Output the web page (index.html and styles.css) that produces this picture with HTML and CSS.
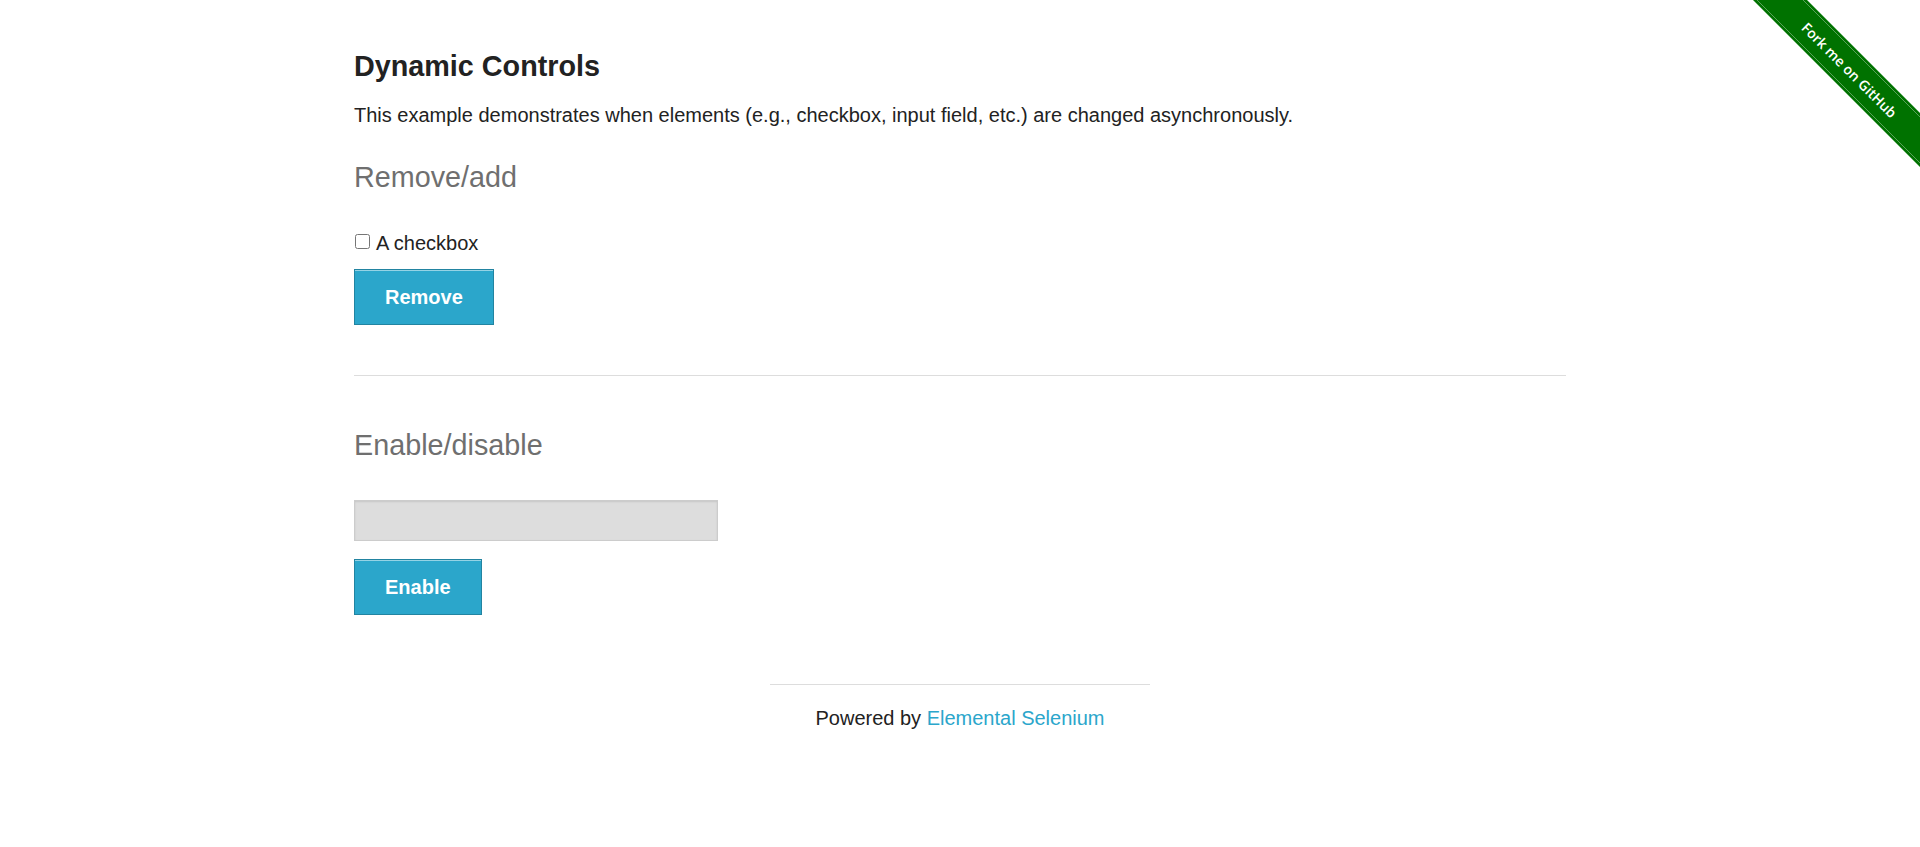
FILE: index.html
```html
<!DOCTYPE html>
<html lang="en">
<head>
<meta charset="utf-8">
<title>The Internet</title>
<link rel="stylesheet" href="styles.css">
</head>
<body>
<a class="ribbon" href="#" aria-label="Fork me on GitHub">
  <svg width="186" height="186" viewBox="0 0 186 186">
    <polygon points="19,0 73,0 186,113 186,167" fill="#007200"/>
    <line x1="69" y1="0" x2="186" y2="117" stroke="rgba(255,255,255,0.35)" stroke-width="1"/>
    <line x1="23" y1="0" x2="186" y2="163" stroke="rgba(255,255,255,0.35)" stroke-width="1"/>
    <text x="115.5" y="70" transform="rotate(45 115.5 70)" text-anchor="middle" dominant-baseline="central" class="ribbon-text">Fork me on GitHub</text>
  </svg>
</a>
<div class="row">
  <div class="content">
    <h3 class="title">Dynamic Controls</h3>
    <p class="intro">This example demonstrates when elements (e.g., checkbox, input field, etc.) are changed asynchronously.</p>
    <h4 class="subheader first">Remove/add</h4>
    <div class="checkbox-row"><input type="checkbox" class="cb"><span>A checkbox</span></div>
    <button class="button btn-remove" type="button">Remove</button>
    <hr class="divider">
    <h4 class="subheader second">Enable/disable</h4>
    <input type="text" class="text-input" disabled>
    <button class="button btn-enable" type="button">Enable</button>
  </div>
</div>
<div class="footer">
  <hr class="footer-hr">
  <div class="powered">Powered by <a href="#">Elemental Selenium</a></div>
</div>
</body>
</html>
```
FILE: styles.css
```css
html, body {
  margin: 0;
  padding: 0;
  background: #fff;
}
body {
  font-family: "Liberation Sans", Arial, sans-serif;
  color: #222;
  font-size: 20px;
}
.row {
  max-width: 1250px;
  margin: 0 auto;
}
.content {
  padding: 49px 19px 0 19px;
  display: flex;
  flex-direction: column;
  align-items: flex-start;
}
.title {
  margin: 0;
  font-size: 28.75px;
  line-height: 34px;
  font-weight: bold;
  color: #222;
}
.intro {
  margin: 16px 0 0 0;
  font-size: 20px;
  line-height: 32px;
}
.subheader {
  margin: 0;
  font-size: 28.75px;
  line-height: 34px;
  font-weight: normal;
  color: #6f6f6f;
}
.subheader.first { margin-top: 29px; }
.subheader.second { margin-top: 52px; }
.checkbox-row {
  margin-top: 37px;
  height: 24px;
  line-height: 24px;
  display: flex;
  align-items: center;
}
.cb {
  width: 15px;
  height: 15px;
  margin: -3px 6px 0 1px;
}
.button {
  font-family: "Liberation Sans", Arial, sans-serif;
  font-weight: bold;
  font-size: 20px;
  line-height: 24px;
  color: #fff;
  background: #2ba6cb;
  border: 1px solid #2284a1;
  box-shadow: inset 0 1px 0 rgba(255,255,255,0.5);
  padding: 15px 30px 15px 30px;
  margin: 0;
  cursor: pointer;
}
.btn-remove { margin-top: 14px; }
.btn-enable { margin-top: 18px; }
.divider {
  align-self: stretch;
  margin: 50px 0 0 0;
  border: 0;
  border-top: 1px solid #ddd;
  height: 0;
}
.text-input {
  margin-top: 38px;
  width: 364px;
  height: 41px;
  box-sizing: border-box;
  background: #ddd;
  border: 1px solid #ccc;
  box-shadow: inset 0 1px 2px rgba(0,0,0,0.1);
  padding: 0 8px;
}
.footer {
  width: 380px;
  margin: 69px auto 0 auto;
}
.footer-hr {
  margin: 0;
  border: 0;
  border-top: 1px solid #ddd;
  height: 0;
}
.powered {
  margin-top: 17px;
  text-align: center;
  font-size: 20px;
  line-height: 32px;
}
.powered a {
  color: #2ba6cb;
  text-decoration: none;
}
.ribbon {
  position: absolute;
  top: 0;
  right: 0;
  width: 186px;
  height: 186px;
  display: block;
}
.ribbon svg { display: block; }
.ribbon-text {
  font-family: "Open Sans", "Liberation Sans", Arial, sans-serif;
  font-weight: 600;
  font-size: 14px;
  fill: #fff;
}
```
